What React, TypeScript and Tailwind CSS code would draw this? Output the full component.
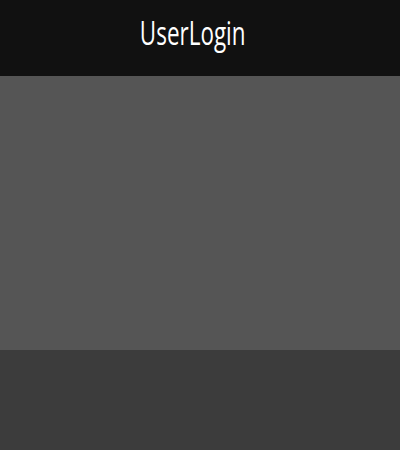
export default function App() {
  return (
    <div className="w-[400px] h-[450px] flex flex-col">
      <div className="h-[76px] bg-[#111111] flex items-center justify-center">
        <span
          className="text-white text-[33px] font-normal leading-none inline-block antialiased scale-x-[0.68] -translate-y-[6px] -translate-x-[7px]"
          style={{ fontFamily: '"Open Sans", sans-serif' }}
        >
          UserLogin
        </span>
      </div>
      <div className="h-[274px] bg-[#555555]" />
      <div className="flex-1 bg-[#3c3c3c]" />
    </div>
  );
}
